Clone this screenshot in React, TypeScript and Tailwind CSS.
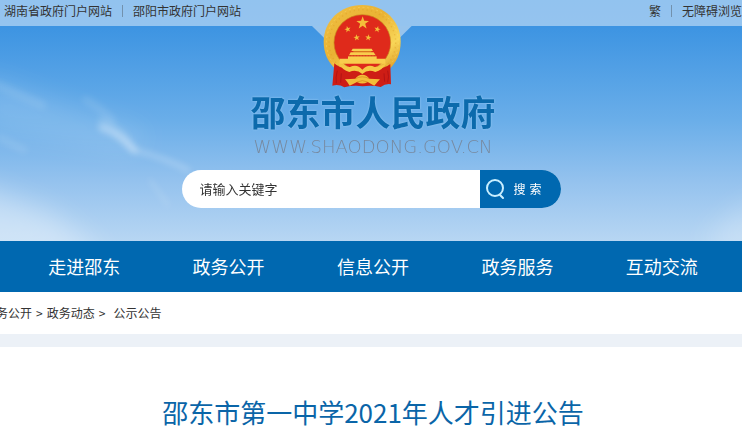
import { Fragment } from 'react'

const PORTAL_LINKS = ['湖南省政府门户网站', '邵阳市政府门户网站']
const TOOL_LINKS = ['繁', '无障碍浏览']
const NAV_ITEMS = ['走进邵东', '政务公开', '信息公开', '政务服务', '互动交流']

const STAR = 'M0 -10 L2.4 -3.2 L9.5 -3.1 L3.8 1.2 L5.9 8.1 L0 4 L-5.9 8.1 L-3.8 1.2 L-9.5 -3.1 L-2.4 -3.2 Z'

function LinkRow({ items }: { items: string[] }) {
  return (
    <div className="flex items-center whitespace-nowrap">
      {items.map((item, i) => (
        <Fragment key={item}>
          {i > 0 && <span className="mx-[10px] h-3 w-px bg-[#7291ad]" />}
          <a href="#">{item}</a>
        </Fragment>
      ))}
    </div>
  )
}

function Sky() {
  return (
    <svg
      className="absolute inset-0 h-full w-full"
      viewBox="0 0 742 241"
      preserveAspectRatio="none"
      aria-hidden="true"
    >
      <defs>
        <linearGradient id="sky" x1="0" y1="0" x2="0" y2="1">
          <stop offset="0" stopColor="#3a92e2" />
          <stop offset="0.11" stopColor="#3d94e2" />
          <stop offset="0.5" stopColor="#6aaee9" />
          <stop offset="0.75" stopColor="#94c2ee" />
          <stop offset="1" stopColor="#b7d6f3" />
        </linearGradient>
        <filter id="soft" x="-50%" y="-50%" width="200%" height="200%">
          <feGaussianBlur stdDeviation="14" />
        </filter>
        <filter id="wisp" x="-50%" y="-50%" width="200%" height="200%">
          <feGaussianBlur stdDeviation="3" />
        </filter>
      </defs>
      <rect width="742" height="241" fill="url(#sky)" />
      <g fill="#fff" filter="url(#soft)">
        <path d="M-40 178 L50 212 L110 260 L-40 260 Z" opacity="0.36" />
        <path d="M-20 75 L60 105 L150 135 L130 150 L-20 125 Z" opacity="0.16" />
        <path d="M700 245 L760 195 L760 260 Z" opacity="0.28" />
      </g>
      <g fill="none" stroke="#fff" strokeLinecap="round" filter="url(#wisp)">
        <path d="M102 128 Q120 134 134 150" strokeWidth="7" opacity="0.3" />
        <path d="M134 150 Q165 158 188 170" strokeWidth="5" opacity="0.22" />
        <path d="M102 122 Q122 130 130 146" strokeWidth="9" opacity="0.14" />
        <path d="M-5 84 Q25 98 42 105" strokeWidth="9" opacity="0.1" />
        <path d="M86 100 Q100 108 112 120" strokeWidth="8" opacity="0.1" />
        <path d="M150 180 L168 205" strokeWidth="3" opacity="0.16" />
        <path d="M0 138 L24 150" strokeWidth="7" opacity="0.1" />
      </g>
    </svg>
  )
}

function Emblem() {
  return (
    <svg width="124" height="95" viewBox="0 0 372 285" role="img" aria-label="国徽">
      <defs>
        <linearGradient id="gold" x1="0" y1="0" x2="1" y2="1">
          <stop offset="0" stopColor="#f0c044" />
          <stop offset="0.45" stopColor="#eab233" />
          <stop offset="0.75" stopColor="#f8d658" />
          <stop offset="1" stopColor="#d9921c" />
        </linearGradient>
      </defs>
      {/* light tab hanging below the top bar */}
      <path d="M36 78 H335 L262 150 H109 Z" fill="#97c4ed" />
      {/* wheat ring */}
      <path
        d="M187 15 C253 15 302 63 302 125 C302 160 290 186 268 207 L107 207 C84 187 71 159 71 125 C71 63 121 15 187 15 Z"
        fill="url(#gold)"
      />
      <ellipse cx="187" cy="128" rx="100" ry="99" fill="none" stroke="#d9951f" strokeWidth="4" strokeDasharray="4 9" opacity="0.35" />
      <ellipse cx="187" cy="128" rx="108" ry="106" fill="none" stroke="#ffe47a" strokeWidth="3" strokeDasharray="6 8" opacity="0.35" />
      <ellipse cx="187" cy="128" rx="85" ry="84" fill="#df2a1b" />
      <ellipse cx="187" cy="128" rx="85" ry="84" fill="none" stroke="#c7881c" strokeWidth="2" />
      {/* stars */}
      <g fill="#f4bd3a">
        <path d={STAR} transform="translate(188 69) scale(2)" />
        <path d={STAR} transform="translate(143 88) rotate(-15)" />
        <path d={STAR} transform="translate(232 88) rotate(15)" />
        <path d={STAR} transform="translate(170 113) rotate(-8)" />
        <path d={STAR} transform="translate(205 113) rotate(8)" />
      </g>
      {/* gate tower */}
      <g fill="#f8ce4d">
        <path d="M158 146 H215 L219 153 H154 Z" />
        <path d="M160 153 H214 V158 H160 Z" fill="#d9761f" />
        <path d="M152 157 H221 L227 166 H147 Z" />
        <path d="M144 169 H230 V178 H144 Z" />
        <path d="M119 176 H256 V191 H119 Z" />
      </g>
      <path d="M149 167 H225" stroke="#c23a18" strokeWidth="2" strokeDasharray="5 4" />
      {/* ribbons and gear */}
      <path
        d="M103 190 Q118 205 142 206 Q163 195 187 213 Q210 195 232 206 Q254 205 271 192 L273 253 Q257 250 242 261 Q215 254 188 259 Q160 255 133 262 Q117 252 97 257 Z"
        fill="#ce1d15"
      />
      <path
        d="M116 190 Q132 201 150 201 Q171 190 187 209 Q204 190 224 201 Q243 201 259 190 Q247 211 226 216 Q204 206 187 222 Q169 206 148 216 Q127 211 116 190 Z"
        fill="#f6c945"
      />
      <path d="M135 238 L166 236 Q174 224 187 224 Q200 224 208 236 L240 238 Q230 248 223 257 L203 246 Q187 255 171 246 L149 257 Q143 247 135 238 Z" fill="#f3bd39" />
      <path d="M166 236 Q187 225 208 236 M171 246 Q187 238 203 246" fill="none" stroke="#d48719" strokeWidth="2" />
      <path d="M112 212 Q106 232 109 250 M263 212 Q268 231 263 247 M124 220 L122 248 M252 220 L254 245" fill="none" stroke="#b31314" strokeWidth="3" />
    </svg>
  )
}

function SearchBox() {
  return (
    <form className="mt-[11px] flex h-[38px] w-[379px] overflow-hidden rounded-full bg-white" onSubmit={(e) => e.preventDefault()}>
      <input
        type="text"
        aria-label="请输入关键字"
        placeholder="请输入关键字"
        className="min-w-0 flex-1 pl-[18px] text-[13px] text-[#333] outline-none placeholder:text-[#333]"
      />
      <button type="submit" className="flex w-[81px] items-center gap-2 bg-[#0068b0] pl-[5px] text-xs text-white">
        <svg width="21" height="22" viewBox="0 0 21 22" fill="none" stroke="#c9efff" strokeWidth="2" strokeLinecap="round">
          <circle cx="10" cy="10" r="8" />
          <path d="M15 17 L18 20" />
        </svg>
        <span className="flex gap-1">
          <span>搜</span>
          <span>索</span>
        </span>
      </button>
    </form>
  )
}

export default function App() {
  return (
    <div className="overflow-hidden bg-white font-['Noto_Sans_CJK_SC',sans-serif] text-[#333]">
      <header className="relative">
        <Sky />
        <div className="relative flex h-[26px] justify-between bg-white/45 pb-1 pl-1 text-xs">
          <LinkRow items={PORTAL_LINKS} />
          <LinkRow items={TOOL_LINKS} />
        </div>
        <div className="pointer-events-none relative -mt-[26px] flex flex-col items-center pb-[33px]">
          <div className="pr-[18px]">
            <Emblem />
          </div>
          <h1 className="pl-1 text-[35px] leading-8 font-bold text-[#0c6aac] [text-shadow:0_0_2px_#a5d2f5]">邵东市人民政府</h1>
          <p className="mt-2 pl-1 font-['DejaVu_Sans',sans-serif] text-[18px] leading-6 font-extralight text-[#77899f]">WWW.SHAODONG.GOV.CN</p>
          <div className="pointer-events-auto">
            <SearchBox />
          </div>
        </div>
      </header>

      <nav className="grid h-[51px] grid-cols-5 items-center bg-[#0068b0] pr-2 pb-0.5 pl-3 text-center text-lg text-white">
        {NAV_ITEMS.map((item) => (
          <a key={item} href="#">{item}</a>
        ))}
      </nav>

      <div className="-ml-1 flex h-[42px] items-center gap-1 text-xs">
        <a href="#">务公开</a>
        <span>&gt;</span>
        <a href="#">政务动态</a>
        <span>&gt;</span>
        <a href="#" className="pl-1">公示公告</a>
      </div>
      <div className="h-[13px] bg-[#ecf1f7]" />

      <main className="pt-[47px] pb-6">
        <h2 className="pl-1 text-center text-[26px] leading-9 text-[#0a65a8]">邵东市第一中学2021年人才引进公告</h2>
      </main>
    </div>
  )
}
